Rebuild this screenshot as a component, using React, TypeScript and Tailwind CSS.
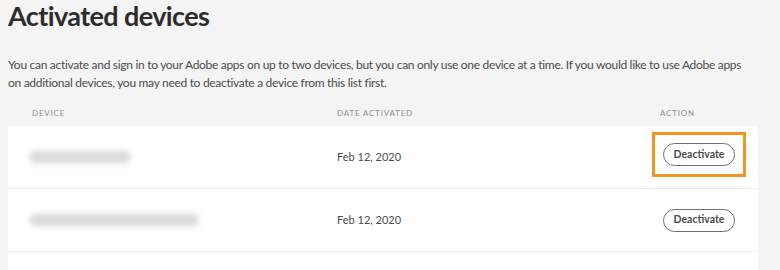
const devices = [
  { name: "w-[100px]", date: "Feb 12, 2020", highlight: true },
  { name: "w-[168px]", date: "Feb 12, 2020", highlight: false },
];

function Blurred({ width }: { width: string }) {
  return (
    <div className={`h-[12px] ${width} rounded-sm bg-[#d9d9d9] blur-[3px]`} />
  );
}

export default function App() {
  return (
    <div className="h-[270px] w-[780px] overflow-hidden bg-[#f4f4f4] font-['Lato',sans-serif]">
      <div className="px-2">
        <h1 className="pt-[2px] text-[27px] font-bold leading-[28px] tracking-[-0.6px] text-[#2c2c2c]">
          Activated devices
        </h1>
        <p className="mt-[26px] max-w-[745px] text-[12px] leading-[18px] tracking-[-0.3px] text-[#4b4b4b]">
          You can activate and sign in to your Adobe apps on up to two devices, but you can only use one device at a time. If you would like to use Adobe apps on additional devices, you may need to deactivate a device from this list first.
        </p>
      </div>
      <div className="mr-[22px] ml-2 mt-[15px] grid grid-cols-[329px_1fr_110px] text-[8px] uppercase tracking-[0.8px] text-[#8e8e8e]">
        <div className="pl-[24px]">Device</div>
        <div>Date activated</div>
        <div className="pl-[12px]">Action</div>
      </div>
      <div className="mr-[22px] ml-2 mt-[7px] bg-white">
        {devices.map((d, i) => (
          <div
            key={i}
            className="grid h-[63px] grid-cols-[329px_1fr_110px] items-center border-b border-[#ececec]"
          >
            <div className="pl-[22px]">
              <Blurred width={d.name} />
            </div>
            <div className="text-[11px] text-[#4b4b4b]">{d.date}</div>
            <div className="flex pl-[4px]">
              <div
                className={
                  d.highlight
                    ? "mb-[5px] border-[3px] border-[#f29423] px-[8px] py-[8px]"
                    : "border-[3px] border-transparent px-[8px] py-[8px]"
                }
              >
                <button className="block h-[23px] w-[72px] rounded-full border-[1.5px] border-[#6e6e6e] text-[10.5px] font-bold text-[#4b4b4b]">
                  Deactivate
                </button>
              </div>
            </div>
          </div>
        ))}
        <div className="h-[20px]" />
      </div>
    </div>
  );
}
